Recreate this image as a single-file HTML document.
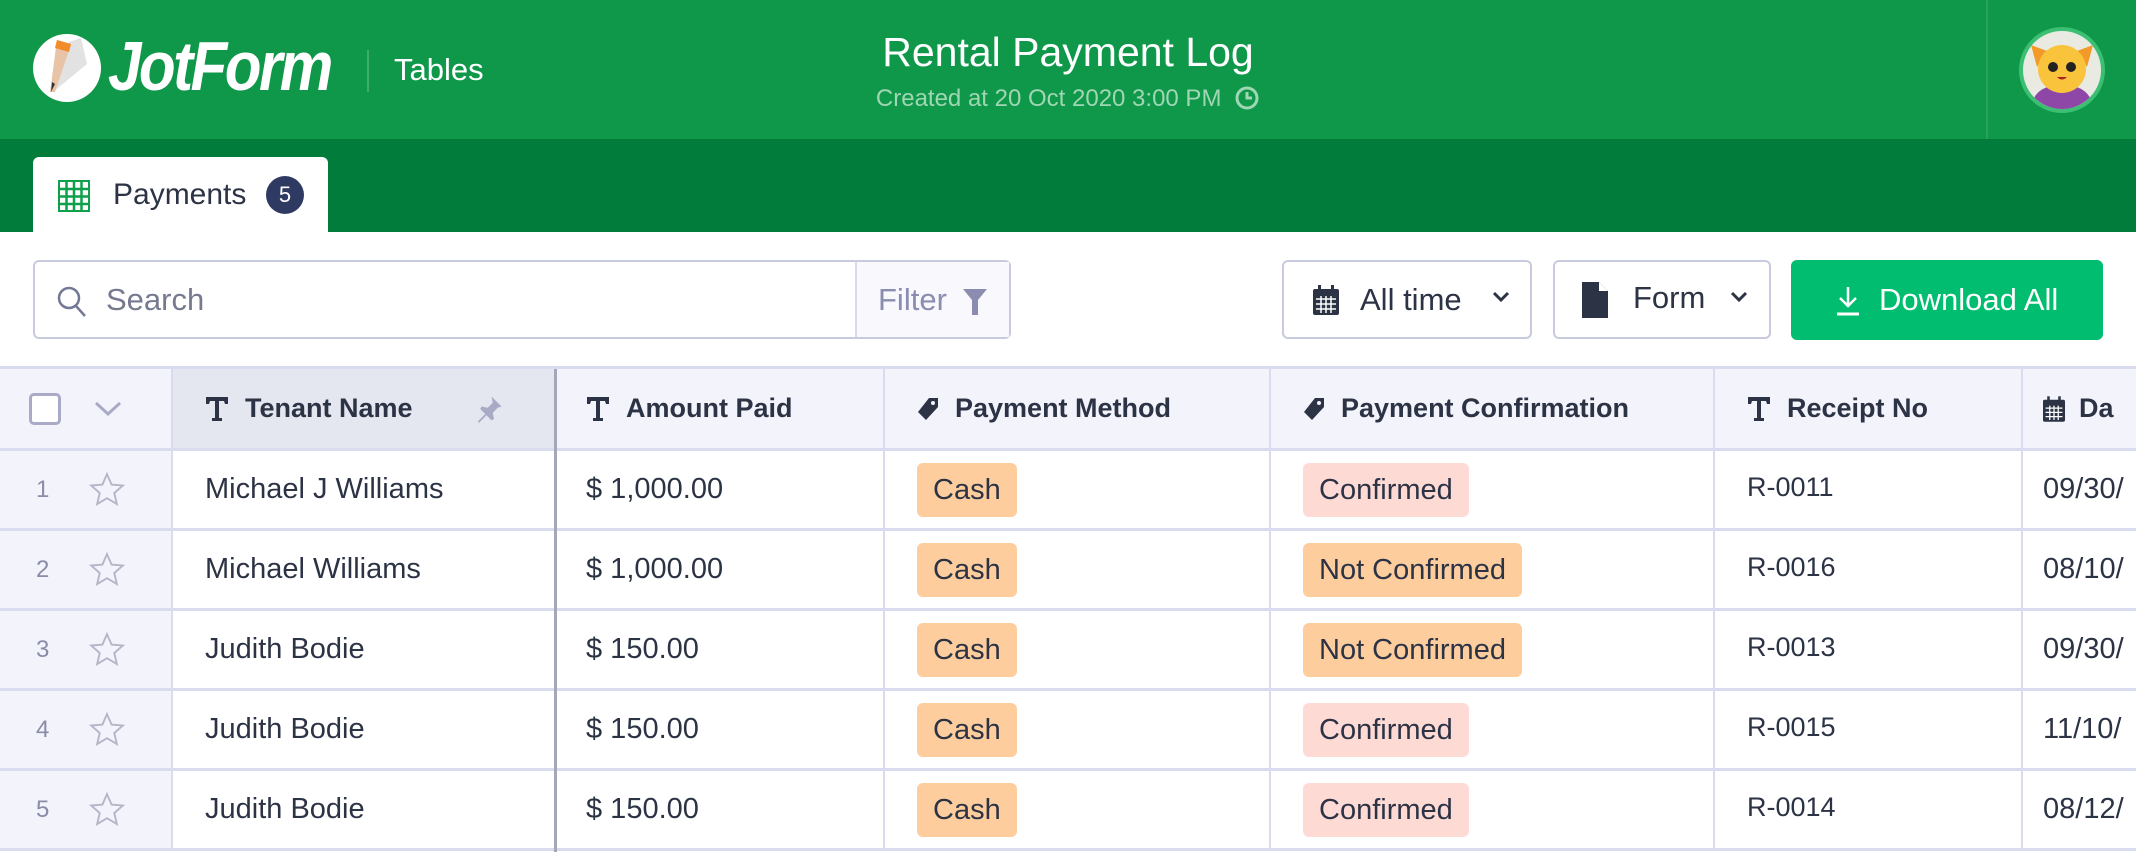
<!DOCTYPE html>
<html><head><meta charset="utf-8">
<style>
*{margin:0;padding:0;box-sizing:border-box}
body{width:2136px;height:852px;overflow:hidden;background:#fff;font-family:"Liberation Sans",sans-serif;color:#2c3345;position:relative}
.abs{position:absolute}
.hdr{left:0;top:0;width:2136px;height:139px;background:#0f974a}
.tabbar{left:0;top:139px;width:2136px;height:93px;background:#027c3a}
.tab{left:33px;top:157px;width:295px;height:76px;background:#fff;border-radius:6px 6px 0 0}
.btn{border:2px solid #c8cadf;border-radius:6px;background:#fff}
.cell{position:absolute;border-right:2px solid #d9dbee;border-bottom:3px solid #d9dbee;height:80px;display:flex;align-items:center;font-size:29px;background:#fff}
.hc{background:#f3f3fc;font-weight:bold;font-size:27px;height:82px}
.pill{display:inline-block;height:54px;line-height:54px;padding:0 16px;border-radius:6px;font-size:29px}
.or{background:#fecd9e}.pk{background:#fedad5}
</style></head><body>
<div class="abs hdr"></div>
<div class="abs tabbar"></div>
<div class="abs" style="left:33px;top:34px;width:68px;height:68px;border-radius:50%;background:#fff;overflow:hidden">
<svg width="68" height="68" viewBox="0 0 68 68"><polygon points="36,8 48,4 54,30 20,58" fill="#e2e2e2"/><polygon points="24,6 38,10 22,58 17,58" fill="#e8c3a8"/><polygon points="24,6 38,10 36,18 22,14" fill="#f28b2a"/><polygon points="19,48 22,50 18,58" fill="#333"/></svg></div>
<div class="abs" style="left:108px;top:26px;font-size:70px;font-weight:bold;font-style:italic;color:#fff;letter-spacing:-3px;transform:scaleX(0.86);transform-origin:left">JotForm</div>
<div class="abs" style="left:367px;top:50px;width:2px;height:42px;background:#3fae6d"></div>
<div class="abs" style="left:394px;top:52px;font-size:31px;color:#fff">Tables</div>
<div class="abs" style="left:0;width:2136px;top:29px;text-align:center;font-size:41px;color:#fff">Rental Payment Log</div>
<div class="abs" style="left:0;width:2136px;top:85px;text-align:center;font-size:24px;color:#9fd6b3;white-space:nowrap">Created at 20 Oct 2020 3:00 PM <svg style="vertical-align:-5px;margin-left:6px" width="26" height="26" viewBox="0 0 26 26"><circle cx="13" cy="13" r="10" fill="none" stroke="#9fd6b3" stroke-width="3"/><path d="M13 7v6h5" fill="none" stroke="#9fd6b3" stroke-width="3"/></svg></div>
<div class="abs" style="left:1986px;top:0;width:2px;height:139px;background:#2aa05c"></div>
<div class="abs" style="left:2019px;top:27px;width:86px;height:86px;border-radius:50%;background:#e9ebe3;border:4px solid #3cbf73;overflow:hidden">
<svg width="78" height="78" viewBox="0 0 78 78"><path d="M8 78 Q10 54 39 54 Q68 54 70 78Z" fill="#8e47a6"/><polygon points="8,14 24,20 14,36" fill="#f29a28"/><polygon points="70,14 54,20 64,36" fill="#f29a28"/><circle cx="39" cy="38" r="24" fill="#f9c43c"/><circle cx="30" cy="36" r="5" fill="#222"/><circle cx="48" cy="36" r="5" fill="#222"/><path d="M34 46 Q39 51 44 46Z" fill="#b02020"/></svg></div>
<div class="abs tab"></div>
<svg class="abs" style="left:58px;top:180px" width="32" height="32" viewBox="0 0 32 32"><rect x="1" y="1" width="30" height="30" fill="#fff" stroke="#10a04b" stroke-width="2"/><path d="M1 9H31M1 16.5H31M1 24H31M8.5 1V31M16 1V31M23.5 1V31" stroke="#10a04b" stroke-width="2.5"/></svg>
<div class="abs" style="left:113px;top:178px;font-size:30px;color:#2c3345">Payments</div>
<div class="abs" style="left:266px;top:176px;width:38px;height:38px;border-radius:50%;background:#2f3a63;color:#fff;font-size:22px;text-align:center;line-height:38px">5</div>
<div class="abs btn" style="left:33px;top:260px;width:978px;height:79px"></div>
<div class="abs" style="left:855px;top:262px;width:154px;height:75px;background:#f8f8fd;border-left:2px solid #d9dbe8"></div>
<svg class="abs" style="left:56px;top:285px" width="32" height="34" viewBox="0 0 32 34"><circle cx="13" cy="13" r="10" fill="none" stroke="#737895" stroke-width="2.5"/><path d="M20 21l9 10" stroke="#737895" stroke-width="2.5"/></svg>
<div class="abs" style="left:106px;top:282px;font-size:31px;color:#757a8f">Search</div>
<div class="abs" style="left:878px;top:282px;font-size:31px;color:#8a8daf">Filter</div>
<svg class="abs" style="left:962px;top:288px" width="26" height="28" viewBox="0 0 26 28"><path d="M1 1H25L16 12V27H10V12Z" fill="#8a8daf"/></svg>
<div class="abs btn" style="left:1282px;top:260px;width:250px;height:79px"></div>
<svg class="abs" style="left:1313px;top:285px" width="26" height="30" viewBox="0 0 26 30"><rect x="0" y="4" width="26" height="26" rx="2" fill="#2c3345"/><rect x="5" y="0" width="3" height="7" fill="#2c3345"/><rect x="18" y="0" width="3" height="7" fill="#2c3345"/><path d="M3 14H23M3 19H23M3 24H23M8 11V28M13 11V28M18 11V28" stroke="#fff" stroke-width="1.5"/></svg>
<div class="abs" style="left:1360px;top:282px;font-size:31px">All time</div>
<svg class="abs" style="left:1492px;top:290px" width="18" height="14" viewBox="0 0 18 14"><path d="M2 3l7 7 7-7" fill="none" stroke="#2c3345" stroke-width="3"/></svg>
<div class="abs btn" style="left:1553px;top:260px;width:218px;height:79px"></div>
<svg class="abs" style="left:1582px;top:282px" width="26" height="36" viewBox="0 0 26 36"><path d="M0 0H17L26 9V36H0Z" fill="#2c3345"/><path d="M17 0V9H26" fill="#fff"/></svg>
<div class="abs" style="left:1633px;top:280px;font-size:31px">Form</div>
<svg class="abs" style="left:1730px;top:290px" width="18" height="14" viewBox="0 0 18 14"><path d="M2 3l7 7 7-7" fill="none" stroke="#2c3345" stroke-width="3"/></svg>
<div class="abs" style="left:1791px;top:260px;width:312px;height:80px;background:#01bd6f;border-radius:6px"></div>
<svg class="abs" style="left:1836px;top:286px" width="24" height="30" viewBox="0 0 24 30"><path d="M12 1V20M4 12l8 8 8-8" fill="none" stroke="#fff" stroke-width="2.5"/><path d="M1 28H23" stroke="#fff" stroke-width="3"/></svg>
<div class="abs" style="left:1879px;top:282px;font-size:31px;color:#fff">Download All</div>
<div class="abs" style="left:0;top:366px;width:2136px;height:3px;background:#d9dbee"></div>
<div id="t"></div>
<script>
(function(){
var cols=[[0,173],[173,556],[556,885],[885,1271],[1271,1715],[1715,2023],[2023,2200]];
var rows=[["Michael J Williams","$ 1,000.00","Cash","Confirmed","R-0011","09/30/"],["Michael Williams","$ 1,000.00","Cash","Not Confirmed","R-0016","08/10/"],["Judith Bodie","$ 150.00","Cash","Not Confirmed","R-0013","09/30/"],["Judith Bodie","$ 150.00","Cash","Confirmed","R-0015","11/10/"],["Judith Bodie","$ 150.00","Cash","Confirmed","R-0014","08/12/"]];
var T='<svg width="24" height="26" viewBox="0 0 24 26" style="margin-right:16px"><path d="M1 1H23V8H20L19 5H14V22H17V25H7V22H10V5H5L4 8H1Z" fill="#2c3345"/></svg>';
var TAG='<svg width="22" height="24" viewBox="0 0 22 24" style="margin-right:16px"><path d="M12 1H21V10L9 23L1 15Z" fill="#2c3345"/><circle cx="16" cy="6" r="2" fill="#f3f3fc"/></svg>';
var CAL='<svg width="22" height="26" viewBox="0 0 26 30" style="margin-right:14px"><rect x="0" y="4" width="26" height="26" rx="2" fill="#2c3345"/><rect x="5" y="0" width="3" height="7" fill="#2c3345"/><rect x="18" y="0" width="3" height="7" fill="#2c3345"/><path d="M3 14H23M3 19H23M3 24H23M8 11V28M13 11V28M18 11V28" stroke="#fff" stroke-width="1.5"/></svg>';
var STAR='<svg width="38" height="38" viewBox="0 0 24 24"><path d="M12 2l2.9 6.6 7.1.6-5.4 4.7 1.6 7-6.2-3.7-6.2 3.7 1.6-7L2 9.2l7.1-.6z" fill="none" stroke="#b4b6c8" stroke-width="1.2"/></svg>';
var hdr=['', T+'Tenant Name', T+'Amount Paid', TAG+'Payment Method', TAG+'Payment Confirmation', T+'Receipt No', CAL+'Da'];
var h='';
function cell(i,yy,html,cls,bg){var c=cols[i];var pad=i==0?0:(i==6?20:32);if(i==2)pad=30;
return '<div class="cell '+cls+'" style="left:'+c[0]+'px;top:'+yy+'px;width:'+(c[1]-c[0])+'px;padding-left:'+pad+'px;'+(bg?'background:'+bg+';':'')+'">'+html+'</div>';}
h+=cell(0,369,'<div style="width:32px;height:32px;border:3px solid #a9abc6;border-radius:5px;background:#fff;margin-left:29px"></div><svg width="30" height="20" viewBox="0 0 30 20" style="margin-left:32px"><path d="M3 4l12 11 12-11" fill="none" stroke="#a9abc6" stroke-width="3"/></svg>','hc');
for(var i=1;i<7;i++){h+=cell(i,369,hdr[i]+(i==1?'<svg style="position:absolute;right:50px" width="30" height="30" viewBox="0 0 24 24"><path d="M14 2l8 8-3 1-4 4 1 5-2 1-4-4-6 6-1-1 6-6-4-4 1-2 5 1 4-4z" fill="#a9abc6"/></svg>':''),'hc',i==1?'#e4e6f0':'');}
for(var r=0;r<5;r++){var yy=451+r*80;var d=rows[r];
h+=cell(0,yy,'<span style="width:88px;padding-left:36px;color:#8a8ca8;font-size:24px">'+(r+1)+'</span>'+STAR,'','#f3f3fc');
h+=cell(1,yy,d[0],'');h+=cell(2,yy,d[1],'');
h+=cell(3,yy,'<span class="pill or">'+d[2]+'</span>','');
h+=cell(4,yy,'<span class="pill '+(d[3]=='Confirmed'?'pk':'or')+'">'+d[3]+'</span>','');
h+=cell(5,yy,'<span style="margin-top:-4px;font-size:27px">'+d[4]+'</span>','');h+=cell(6,yy,d[5],'');}
document.getElementById('t').innerHTML=h;
})();
</script>
<div class="abs" style="left:554px;top:369px;width:3px;height:483px;background:#a4a6ba"></div>
</body></html>
